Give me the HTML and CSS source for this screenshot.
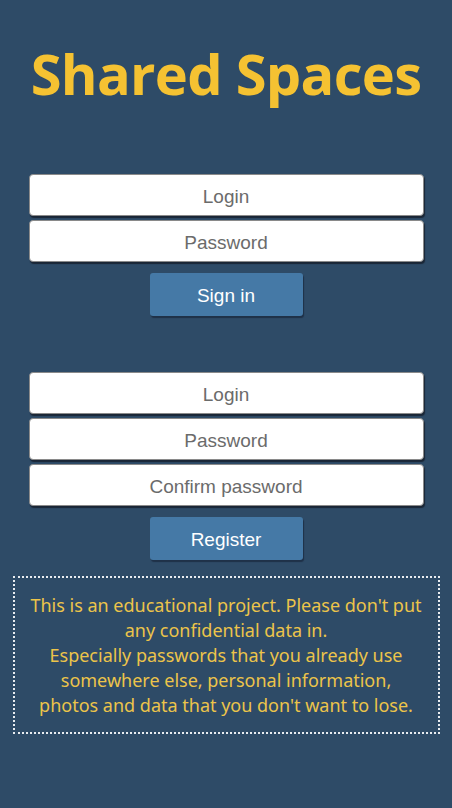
FILE: index.html
```html
<!DOCTYPE html>
<html>
<head>
<meta charset="utf-8">
<link rel="stylesheet" href="styles.css">
</head>
<body>
<div class="page">
  <h1 class="title">Shared Spaces</h1>
  <form class="form form-login">
    <input class="field" type="text" placeholder="Login">
    <input class="field" type="password" placeholder="Password">
    <button class="btn" type="button">Sign in</button>
  </form>
  <form class="form form-register">
    <input class="field" type="text" placeholder="Login">
    <input class="field" type="password" placeholder="Password">
    <input class="field" type="password" placeholder="Confirm password">
    <button class="btn" type="button">Register</button>
  </form>
  <div class="notice">
    This is an educational project. Please don't put any confidential data in.<br>
    Especially passwords that you already use somewhere else, personal information,<br>
    photos and data that you don't want to lose.
  </div>
</div>
</body>
</html>
```
FILE: styles.css
```css
html, body {
  margin: 0;
  padding: 0;
  background: #2e4b67;
  height: 100%;
}
.page {
  display: flex;
  flex-direction: column;
  align-items: center;
  padding: 35px 13px 0 13px;
}
.title {
  margin: 0;
  font-family: "Open Sans", "Noto Sans", sans-serif;
  font-weight: 700;
  font-size: 56px;
  line-height: 76px;
  color: #f5c232;
  letter-spacing: -0.7px;
}
.form {
  display: flex;
  flex-direction: column;
  align-items: center;
  gap: 4px;
  width: 395px;
}
.form-login { margin-top: 63px; }
.form-register { margin-top: 56px; }
.field {
  box-sizing: border-box;
  width: 395px;
  height: 42px;
  margin: 0;
  padding: 3px 4px 0;
  border: 1px solid #8a8a8a;
  border-radius: 4px;
  background: #fff;
  box-shadow: 1px 2px 1px #1a2636;
  font-family: "Liberation Sans", Arial, sans-serif;
  font-size: 19px;
  text-align: center;
  color: #333;
  outline: none;
}
.field::placeholder { color: #6b6b6b; }
.btn {
  margin-top: 7px;
  width: 153px;
  height: 43px;
  border: none;
  border-radius: 3px;
  background: #4579a6;
  box-shadow: 1px 2px 1px #1f3148;
  color: #fff;
  font-family: "Liberation Sans", Arial, sans-serif;
  font-size: 19px;
  padding: 2px 0 0;
}
.notice {
  box-sizing: border-box;
  width: 427px;
  margin-top: 16px;
  border: 2px dotted #e8ecf0;
  padding: 15px 10px 14px;
  color: #ecc44a;
  font-family: "Noto Sans", "Open Sans", sans-serif;
  font-size: 18px;
  line-height: 25px;
  text-align: center;
}
```
